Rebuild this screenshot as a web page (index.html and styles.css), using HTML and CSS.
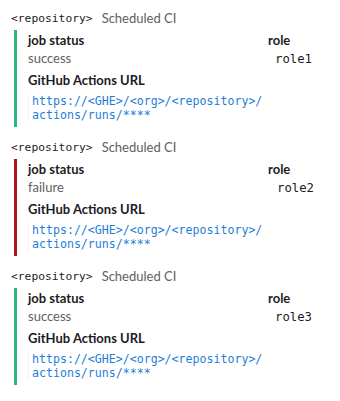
FILE: index.html
```html
<!DOCTYPE html>
<html>
<head>
    <title>Scheduled CI</title>
    <meta name="viewport" content="width=device-width, initial-scale=1.0">
    <link rel="stylesheet" href="styles.css">
</head>
<body>
    <!-- one message per job run -->
    <div class="message">
        <div class="message-header">
            <span class="repo">&lt;repository&gt;</span>
            <span class="title">Scheduled CI</span>
        </div>
        <div class="attachment success">
            <div class="field-label">job status</div>
            <div class="field-label">role</div>
            <div class="field-value">success</div>
            <div class="role-value">role1</div>
            <div class="field-label wide url-label">GitHub Actions URL</div>
            <a class="run-url wide" href="#">https://&lt;GHE&gt;/&lt;org&gt;/&lt;repository&gt;/<br>actions/runs/****</a>
        </div>
    </div>

    <div class="message">
        <div class="message-header">
            <span class="repo">&lt;repository&gt;</span>
            <span class="title">Scheduled CI</span>
        </div>
        <div class="attachment failure">
            <div class="field-label">job status</div>
            <div class="field-label">role</div>
            <div class="field-value">failure</div>
            <div class="role-value shifted">role2</div>
            <div class="field-label wide url-label">GitHub Actions URL</div>
            <a class="run-url wide" href="#">https://&lt;GHE&gt;/&lt;org&gt;/&lt;repository&gt;/<br>actions/runs/****</a>
        </div>
    </div>

    <div class="message">
        <div class="message-header">
            <span class="repo">&lt;repository&gt;</span>
            <span class="title">Scheduled CI</span>
        </div>
        <div class="attachment success">
            <div class="field-label">job status</div>
            <div class="field-label">role</div>
            <div class="field-value">success</div>
            <div class="role-value">role3</div>
            <div class="field-label wide url-label">GitHub Actions URL</div>
            <a class="run-url wide" href="#">https://&lt;GHE&gt;/&lt;org&gt;/&lt;repository&gt;/<br>actions/runs/****</a>
        </div>
    </div>
</body>
</html>
```

FILE: styles.css
```css
body {
    margin: 0;
    padding: 8px 0 0 11px;
    background-color: #fff;
    font-family: Lato, "Noto Sans", sans-serif;
    color: #1d1c1d;
}

.message {
    margin-bottom: 10px;
}

.message-header {
    display: flex;
    align-items: center;
    height: 20px;
    margin-bottom: 2px;
}

.repo {
    font-family: "DejaVu Sans Mono", monospace;
    font-size: 11.3px;
    color: #1d1c1d;
    margin-right: 9px;
}

.title {
    font-size: 13px;
    color: #616061;
}

.attachment {
    display: grid;
    grid-template-columns: 240px auto;
    margin-left: 3px;
    padding: 1px 0 5px 11px;
    border-left: 3px solid #2eb67d;
}

.attachment.failure {
    border-left-color: #b0121c;
}

.field-label {
    font-size: 13px;
    font-weight: bold;
    line-height: 18px;
}

.field-value {
    font-size: 13px;
    line-height: 18px;
    color: #616061;
}

.role-value {
    font-family: "DejaVu Sans Mono", monospace;
    font-size: 12.3px;
    line-height: 20px;
    padding-left: 7px;
}

.role-value.shifted {
    padding-left: 9px;
}

.wide {
    grid-column: 1 / 3;
}

.url-label {
    margin-top: 2px;
}

.run-url {
    display: block;
    margin-top: 5px;
    padding-left: 3px;
    border-left: 1px solid #f2f2f2;
    font-family: "DejaVu Sans Mono", monospace;
    font-size: 11.6px;
    line-height: 14px;
    color: #1d7ed8;
    text-decoration: none;
}
```
